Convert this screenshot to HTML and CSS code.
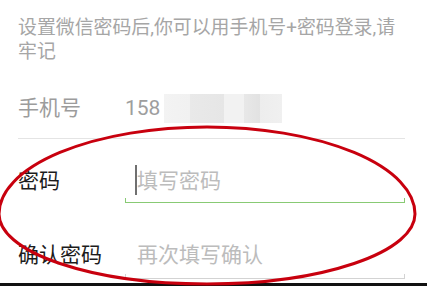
FILE: index.html
```html
<!DOCTYPE html>
<html lang="zh-CN">
<head>
<meta charset="utf-8">
<title>设置微信密码</title>
<link rel="stylesheet" href="styles.css">
</head>
<body>
<div class="page">
  <div class="content">
    <p class="intro">设置微信密码后,你可以用手机号+密码登录,请牢记</p>
    <div class="phone">
      <span class="label">手机号</span>
      <span class="value">158<span class="blur"></span></span>
    </div>
    <div class="field">
      <span class="label dark">密码</span>
      <div class="input focused">
        <span class="caret"></span>
        <span class="placeholder">填写密码</span>
      </div>
    </div>
    <div class="field confirm">
      <span class="label dark">确认密码</span>
      <div class="input">
        <span class="placeholder">再次填写确认</span>
      </div>
    </div>
  </div>
  <div class="navbar"></div>
  <svg class="mark" width="427" height="286" viewBox="0 0 427 286" aria-hidden="true">
    <path d="M -1 214 A 208 87 0 0 1 415 214 A 208 70 0 0 1 -1 214 Z" fill="none" stroke="#c8000e" stroke-width="3"/>
  </svg>
</div>
</body>
</html>
```
FILE: styles.css
```css
html, body {
  margin: 0;
  padding: 0;
  overflow: hidden;
  background: #fff;
}
.page {
  position: relative;
  display: grid;
  grid-template-rows: 1fr 3px;
  width: 427px;
  height: 286px;
  overflow: hidden;
  font-family: Roboto, "Noto Sans CJK SC", sans-serif;
}
.content {
  min-height: 0;
  overflow: hidden;
}
.intro {
  margin: 0;
  padding: 16px 18px 0 18px;
  height: 48px;
  font-size: 18.9px;
  line-height: 24px;
  color: #a6a6a6;
}
.phone {
  display: flex;
  margin: 0 22px 0 18px;
  padding: 20px 0 6px 0;
  height: 48px;
  line-height: 48px;
  border-bottom: 1px solid #e4e4e4;
}
.label {
  width: 107px;
  flex: none;
  font-size: 21px;
  color: #9c9c9c;
}
.label.dark {
  color: #1c1c1c;
}
.value {
  display: flex;
  align-items: center;
  font-size: 21px;
  color: #9e9e9e;
}
.blur {
  display: inline-block;
  width: 118px;
  height: 29px;
  margin-left: 4px;
  background: linear-gradient(90deg,
    #f3f3f3 0, #f1f1f1 26px, #e9e9e9 26px, #e6e6e6 60px,
    #f2f2f2 60px, #f2f2f2 80px, #e8e8e8 80px, #e2e2e2 96px,
    #ededed 96px, #f0f0f0 118px);
}
.field {
  display: flex;
  margin: 0 22px 0 18px;
  height: 64px;
}
.field .label {
  padding-top: 26px;
  line-height: 32px;
}
.input {
  position: relative;
  flex: 1;
  padding: 26px 0 0 12px;
  line-height: 32px;
  border-bottom: 1px solid #d3d3d3;
}
.input::before,
.input::after {
  content: "";
  position: absolute;
  bottom: 0;
  width: 1px;
  height: 4px;
  background: #d3d3d3;
}
.input::before { left: 0; }
.input::after { right: 0; }
.input.focused {
  border-bottom: 1.5px solid #88ca74;
}
.input.focused::before,
.input.focused::after {
  background: #88ca74;
}
.confirm {
  height: 76px;
}
.confirm .label,
.confirm .input {
  padding-top: 36px;
}
.placeholder {
  font-size: 21px;
  color: #bcbcbc;
}
.caret {
  position: absolute;
  left: 10px;
  top: 26px;
  width: 2px;
  height: 30px;
  background: #707070;
}
.navbar {
  background: #111;
}
.mark {
  position: absolute;
  left: 0;
  top: 0;
  pointer-events: none;
}
```
